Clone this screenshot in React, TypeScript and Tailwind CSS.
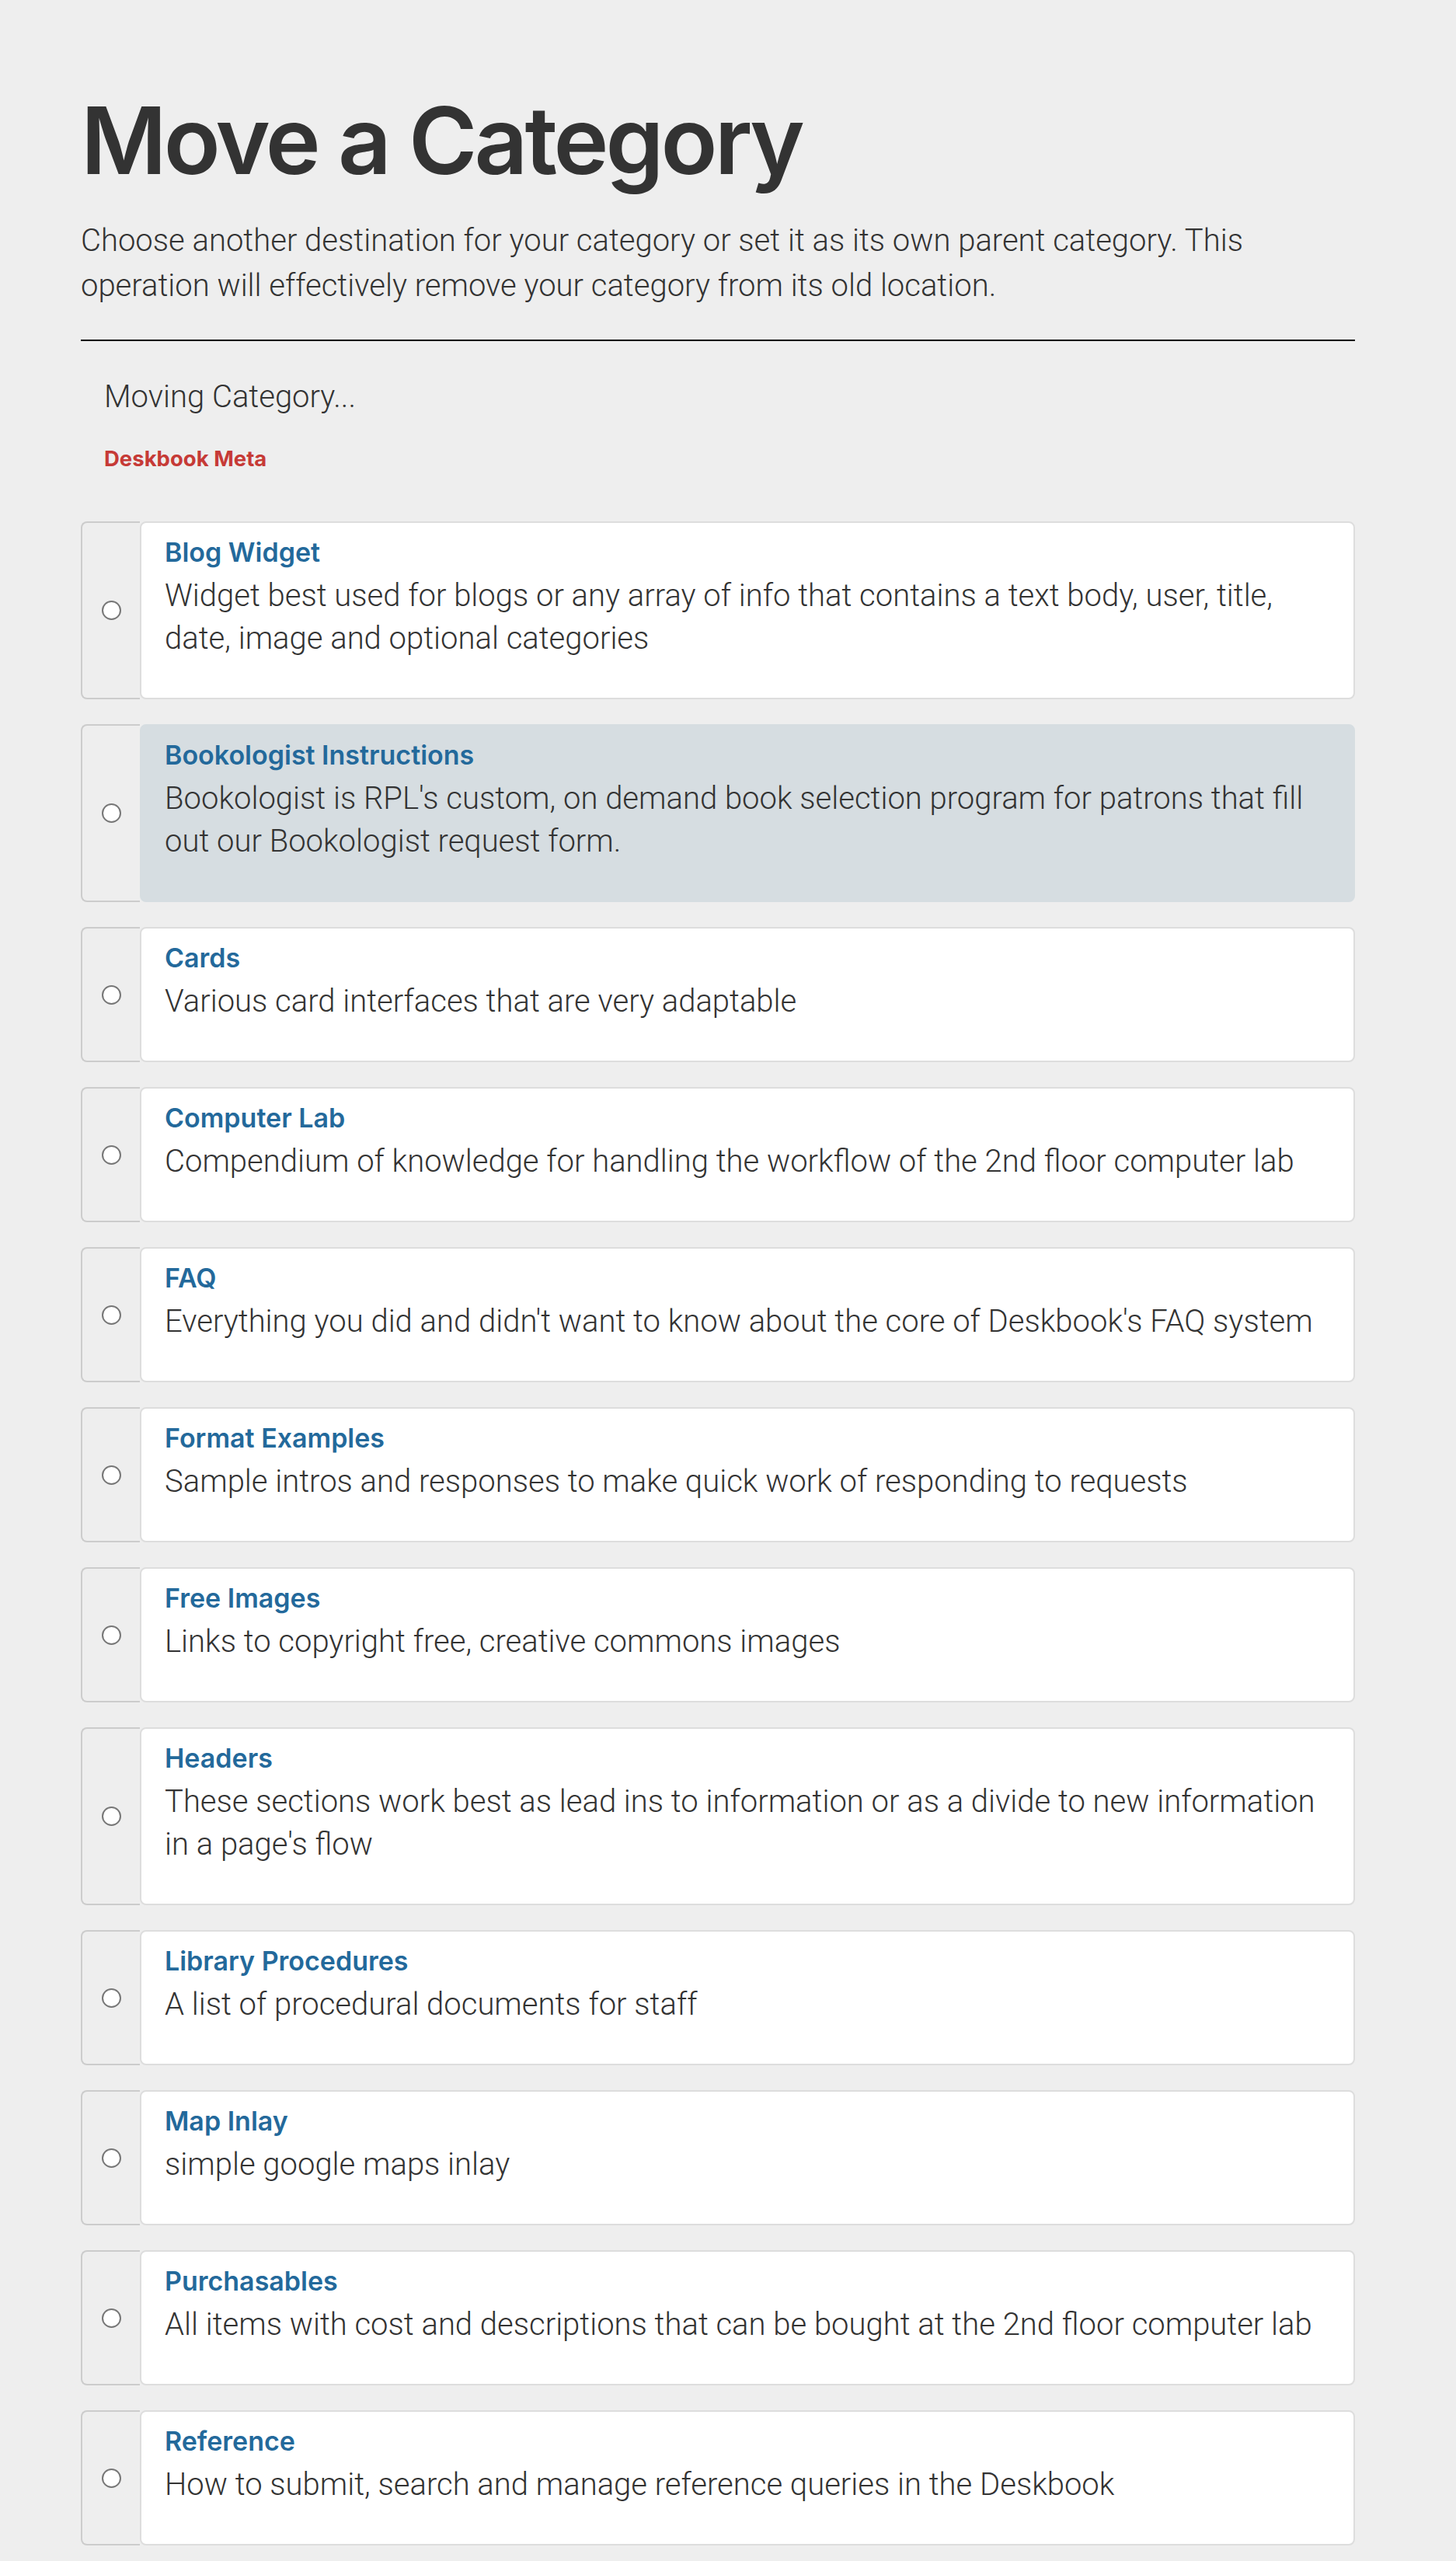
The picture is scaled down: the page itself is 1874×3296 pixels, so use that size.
import React from 'react';

const categories = [
  { name: 'Blog Widget', desc: 'Widget best used for blogs or any array of info that contains a text body, user, title, date, image and optional categories' },
  { name: 'Bookologist Instructions', desc: "Bookologist is RPL's custom, on demand book selection program for patrons that fill out our Bookologist request form.", active: true },
  { name: 'Cards', desc: 'Various card interfaces that are very adaptable' },
  { name: 'Computer Lab', desc: 'Compendium of knowledge for handling the workflow of the 2nd floor computer lab' },
  { name: 'FAQ', desc: "Everything you did and didn't want to know about the core of Deskbook's FAQ system" },
  { name: 'Format Examples', desc: 'Sample intros and responses to make quick work of responding to requests' },
  { name: 'Free Images', desc: 'Links to copyright free, creative commons images' },
  { name: 'Headers', desc: "These sections work best as lead ins to information or as a divide to new information in a page's flow" },
  { name: 'Library Procedures', desc: 'A list of procedural documents for staff' },
  { name: 'Map Inlay', desc: 'simple google maps inlay' },
  { name: 'Purchasables', desc: 'All items with cost and descriptions that can be bought at the 2nd floor computer lab' },
  { name: 'Reference', desc: 'How to submit, search and manage reference queries in the Deskbook' },
];

export default function App() {
  return (
    <div className="min-h-screen bg-[#eeeeee] pl-[104px] pr-[130px] pt-[106px] pb-[40px] text-[#333] [font-family:Inter,'Noto_Sans',sans-serif]">
      <h1 className="text-[120px] font-semibold leading-[149px] tracking-[-4px]">Move a Category</h1>
      <p className="mt-[26px] text-[40px] font-light leading-[58px] [font-family:Roboto,sans-serif]">
        Choose another destination for your category or set it as its own parent category. This operation will effectively remove your category from its old location.
      </p>
      <hr className="mt-[40px] border-0 border-t-2 border-black" />

      <div className="pl-[30px]">
        <p className="mt-[42px] text-[40px] font-light leading-[60px] [font-family:Roboto,sans-serif]">Moving Category...</p>
        <p className="mt-[31px] text-[27.5px] font-bold leading-[36px] text-[#c63a36]">Deskbook Meta</p>
      </div>

      <div className="mt-[63px] flex flex-col gap-[32px]">
        {categories.map((c) => (
          <label key={c.name} className="flex items-stretch">
            <div className="flex w-[76px] shrink-0 items-center justify-center rounded-l-[8px] border-2 border-r-0 border-[#cccccc] bg-[#eeeeee]">
              <span className="block h-[25px] w-[25px] rounded-full border-2 border-[#777] bg-white" />
            </div>
            <div
              className={
                c.active
                  ? 'flex-1 rounded-[8px] border-2 border-[#d6dde1] bg-[#d6dde1] pl-[30px] pr-[30px] pt-[18px] pb-[49px]'
                  : 'flex-1 rounded-[8px] border-2 border-[#dddddd] bg-white pl-[30px] pr-[30px] pt-[18px] pb-[49px]'
              }
            >
              <div className="text-[34px] font-semibold leading-[40px] text-[#23699b]">{c.name}</div>
              <div className="mt-[8px] text-[40px] font-light leading-[55px] [font-family:Roboto,sans-serif]">{c.desc}</div>
            </div>
          </label>
        ))}
      </div>
    </div>
  );
}
